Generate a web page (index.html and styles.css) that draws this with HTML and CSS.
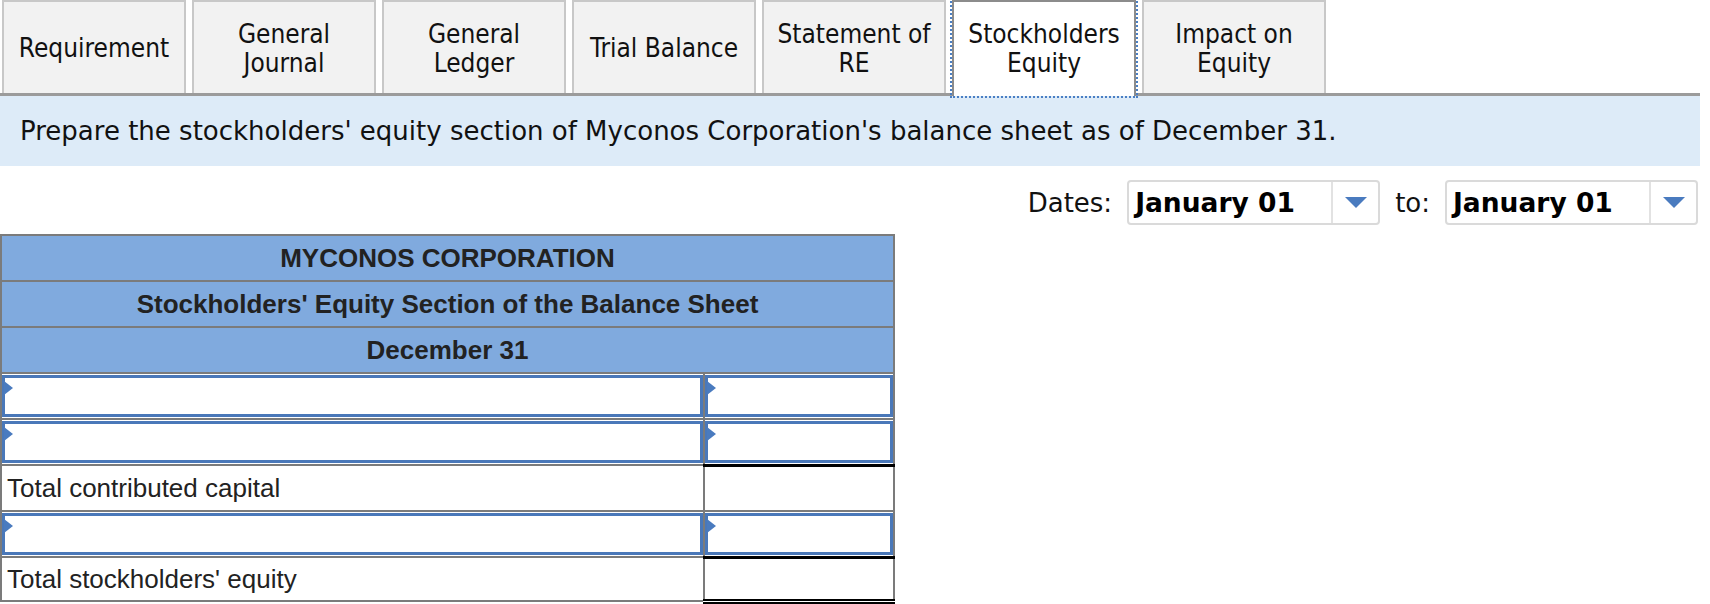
FILE: index.html
```html
<!DOCTYPE html>
<html>
<head>
<meta charset="utf-8">
<link rel="stylesheet" href="styles.css">
</head>
<body>
<div class="page">
  <div class="tabs">
    <div class="tab"><span>Requirement</span></div>
    <div class="tab"><span>General<br>Journal</span></div>
    <div class="tab"><span>General<br>Ledger</span></div>
    <div class="tab"><span>Trial Balance</span></div>
    <div class="tab"><span>Statement of<br>RE</span></div>
    <div class="tab active"><span>Stockholders<br>Equity</span></div>
    <div class="tab"><span>Impact on<br>Equity</span></div>
  </div>
  <div class="band">Prepare the stockholders' equity section of Myconos Corporation's balance sheet as of December 31.</div>
  <div class="dates">
    <span class="lbl">Dates:</span>
    <div class="select"><span class="val">January 01</span><span class="arrow"><i class="tri"></i></span></div>
    <span class="lbl">to:</span>
    <div class="select"><span class="val">January 01</span><span class="arrow"><i class="tri"></i></span></div>
  </div>
  <table class="sheet">
    <tr class="hd"><td colspan="2">MYCONOS CORPORATION</td></tr>
    <tr class="hd"><td colspan="2">Stockholders' Equity Section of the Balance Sheet</td></tr>
    <tr class="hd"><td colspan="2">December 31</td></tr>
    <tr class="row"><td class="lab in"><div class="inp"><i class="ptr"></i></div></td><td class="amt in"><div class="inp"><i class="ptr"></i></div></td></tr>
    <tr class="row"><td class="lab in"><div class="inp"><i class="ptr"></i></div></td><td class="amt in"><div class="inp"><i class="ptr"></i></div></td></tr>
    <tr class="row"><td class="lab txt">Total contributed capital</td><td class="amt sum"></td></tr>
    <tr class="row"><td class="lab in"><div class="inp"><i class="ptr"></i></div></td><td class="amt in"><div class="inp"><i class="ptr"></i></div></td></tr>
    <tr class="row last"><td class="lab txt">Total stockholders' equity</td><td class="amt sum total"></td></tr>
  </table>
</div>
</body>
</html>
```
FILE: styles.css
```css
* { box-sizing: border-box; }
html, body { margin: 0; padding: 0; background: #fff; }
body { font-family: "DejaVu Sans", Verdana, sans-serif; color: #000; }
.page { width: 1700px; }

.tabs {
  display: flex;
  gap: 6px;
  padding-left: 2px;
  height: 96px;
  border-bottom: 3px solid #9b9b9b;
}
.tab {
  width: 184px;
  height: 93px;
  background: #f2f2f2;
  border: 2px solid #c8c8c8;
  border-bottom: none;
  display: flex;
  align-items: center;
  justify-content: center;
  text-align: center;
  font-family: "DejaVu Sans Condensed", "DejaVu Sans", sans-serif;
  font-stretch: condensed;
  font-size: 26px;
  line-height: 29px;
  padding-top: 2px;
  color: #111;
}
.tab.active {
  background: #fff;
  height: 96px;
  border-color: #8c8c8c;
  outline: 2px dotted #4a7fc4;
  outline-offset: 0;
  padding-top: 0;
  padding-bottom: 1px;
}

.band {
  background: #ddebf8;
  height: 70px;
  display: flex;
  align-items: center;
  padding-left: 20px;
  font-size: 26px;
  color: #111;
}

.dates {
  display: flex;
  justify-content: flex-end;
  align-items: center;
  gap: 15px;
  padding: 5px 2px 0 0;
  height: 68px;
}
.lbl { font-size: 26px; color: #111; }
.select {
  width: 253px;
  height: 45px;
  border: 2px solid #dadada;
  border-radius: 4px;
  display: flex;
  align-items: stretch;
}
.val {
  flex: 1;
  display: flex;
  align-items: center;
  padding-left: 6px;
  font-weight: bold;
  font-size: 26.5px;
  color: #000;
}
.arrow {
  width: 47px;
  border-left: 2px solid #e2e2e2;
  display: flex;
  align-items: center;
  justify-content: center;
}
.tri {
  width: 0; height: 0;
  border-left: 11px solid transparent;
  border-right: 11px solid transparent;
  border-top: 11px solid #4a7bbf;
}

.sheet {
  border-collapse: collapse;
  width: 895px;
  font-family: "Liberation Sans", Arial, sans-serif;
  font-size: 26px;
  color: #222;
}
.sheet td { border: 2px solid #7b7b7b; padding: 0; }
.hd td {
  background: #80aade;
  height: 46px;
  text-align: center;
  font-weight: bold;
}
.row td { height: 46px; }
.row.last td { height: 44px; }
.lab { width: 703px; }
.txt { padding-left: 5px !important; }
.in { position: relative; }
.inp {
  height: 42px;
  border: 3px solid #4a78b9;
  background: #fff;
  position: relative;
}
.ptr {
  position: absolute;
  left: -1px; top: 3px;
  width: 0; height: 0;
  border-top: 7px solid transparent;
  border-bottom: 7px solid transparent;
  border-left: 9px solid #4a7bbf;
}
.sum { border-top: 3px solid #000 !important; }
.total { border-bottom: 5px double #000 !important; }
```
